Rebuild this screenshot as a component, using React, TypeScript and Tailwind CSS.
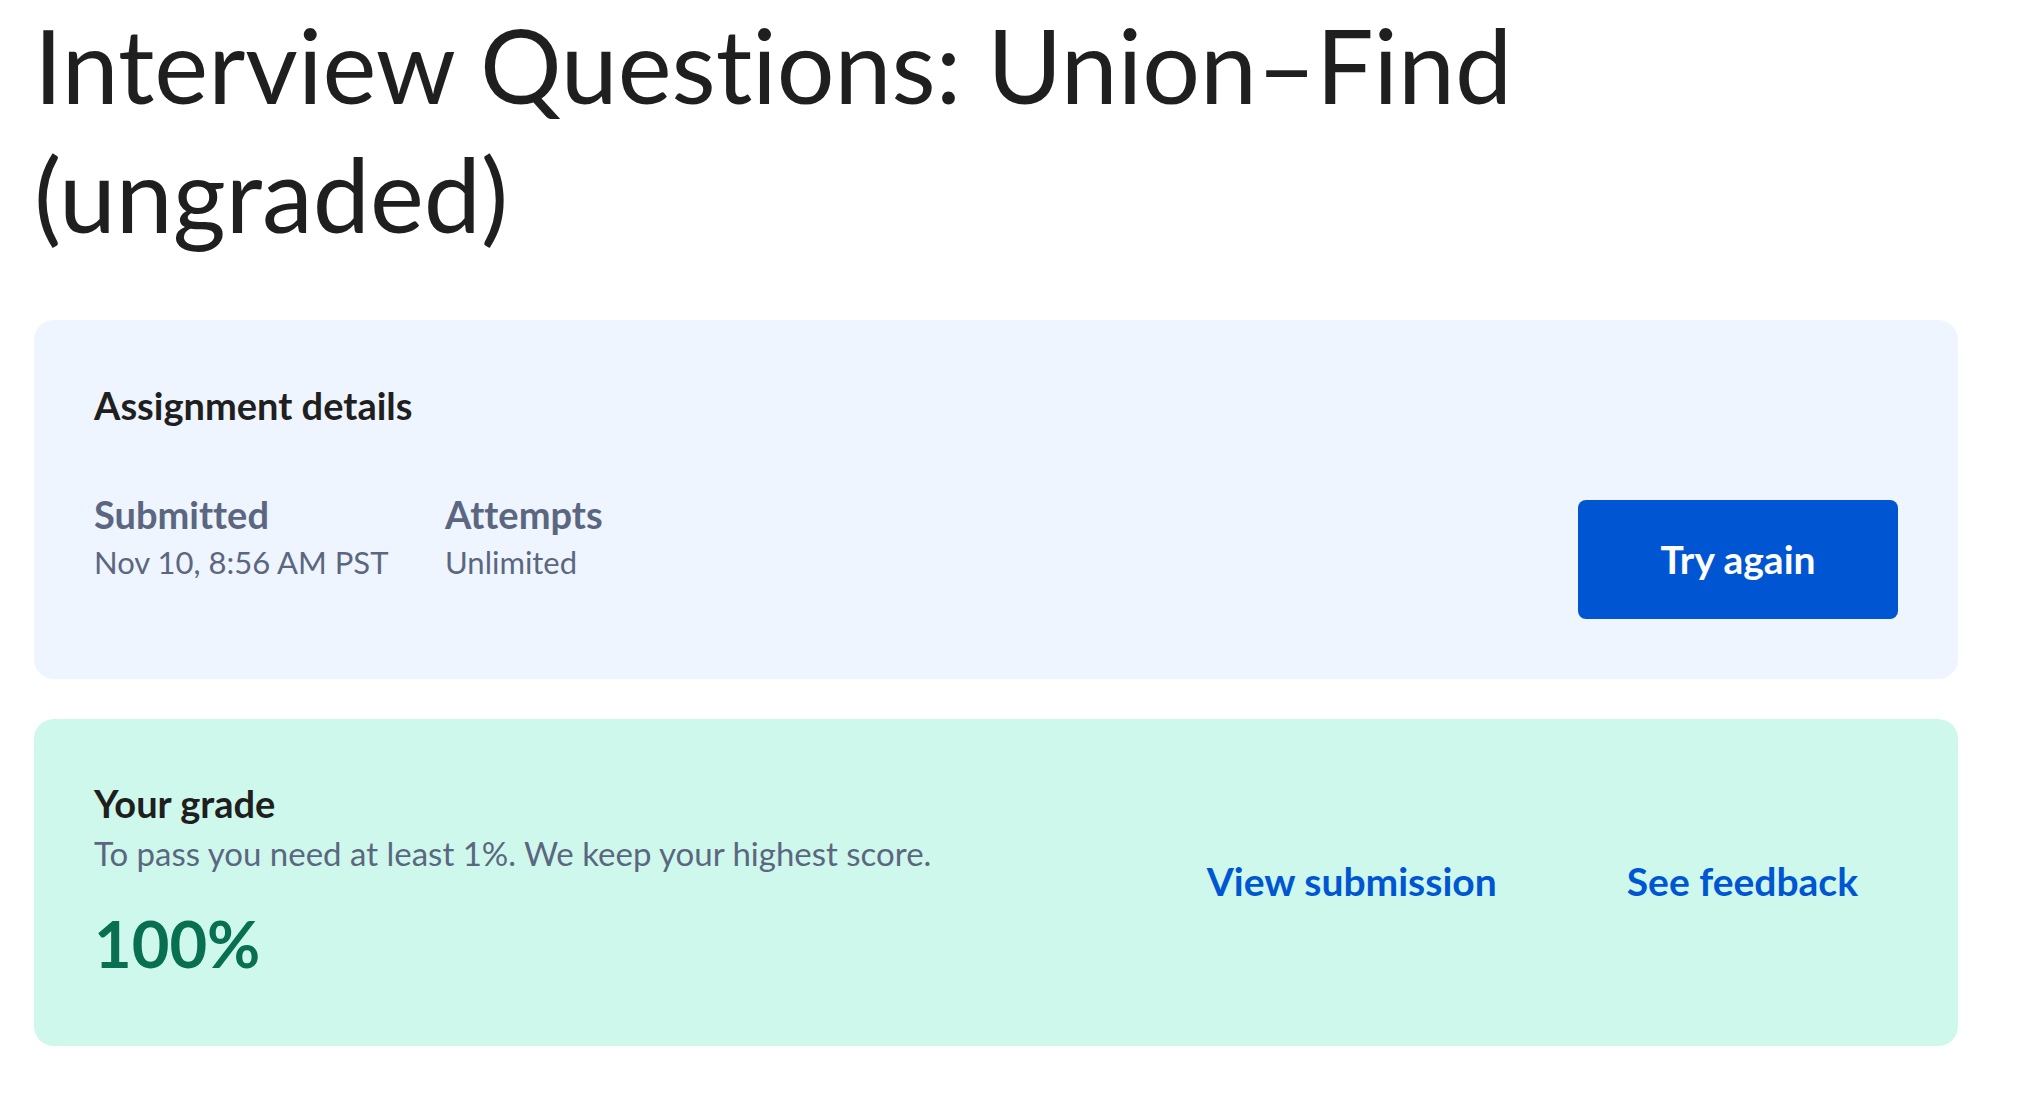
const font = { fontFamily: "Lato, 'Open Sans', sans-serif" };

function DetailItem({ label, value, wide }: { label: string; value: string; wide?: boolean }) {
  return (
    <div className={wide ? "w-[351px] shrink-0" : "shrink-0"}>
      <div className="text-[38px] leading-[46px] font-bold text-[#5b6780]">{label}</div>
      <div className="text-[31px] leading-[50px] text-[#5b6780]">{value}</div>
    </div>
  );
}

export default function App() {
  return (
    <div className="min-h-screen bg-white pl-[34px] [font-variant-ligatures:no-common-ligatures]" style={font}>
      {/* Page title */}
      <h1 className="w-[1900px] text-[102px] leading-[129px] font-normal text-[#1f1f1f]">
        Interview Questions: Union–Find (ungraded)
      </h1>

      {/* Assignment details card */}
      <section className="mt-[62px] w-[1924px] rounded-[20px] bg-[#eef5ff] px-[60px] pt-[63px] pb-[60px]">
        <h2 className="text-[38px] leading-[44px] font-bold text-[#1f1f1f]">Assignment details</h2>
        <div className="mt-[64px] flex items-start justify-between">
          <div className="flex">
            <DetailItem label="Submitted" value="Nov 10, 8:56 AM PST" wide />
            <DetailItem label="Attempts" value="Unlimited" />
          </div>
          <button className="mt-[9px] flex h-[119px] w-[320px] items-center justify-center rounded-lg bg-[#0056d2] text-[39px] font-bold text-white">
            Try again
          </button>
        </div>
      </section>

      {/* Grade card */}
      <section className="mt-[40px] flex w-[1924px] items-center justify-between rounded-[20px] bg-[#cff8ec] pl-[60px] pr-[60px] pt-[62px] pb-[65px]">
        <div>
          <h2 className="text-[38px] leading-[44px] font-bold text-[#1f1f1f]">Your grade</h2>
          <p className="mt-[6px] text-[33px] leading-[44px] text-[#5b6780]">
            To pass you need at least 1%. We keep your highest score.
          </p>
          <div className="mt-[30px] text-[65px] leading-[76px] font-bold text-[#087051]">100%</div>
        </div>
        <div className="flex items-center gap-[50px]">
          <a className="px-[40px] text-[39px] leading-[44px] font-bold text-[#0056d2]">View submission</a>
          <a className="px-[40px] text-[39px] leading-[44px] font-bold text-[#0056d2]">See feedback</a>
        </div>
      </section>
    </div>
  );
}
